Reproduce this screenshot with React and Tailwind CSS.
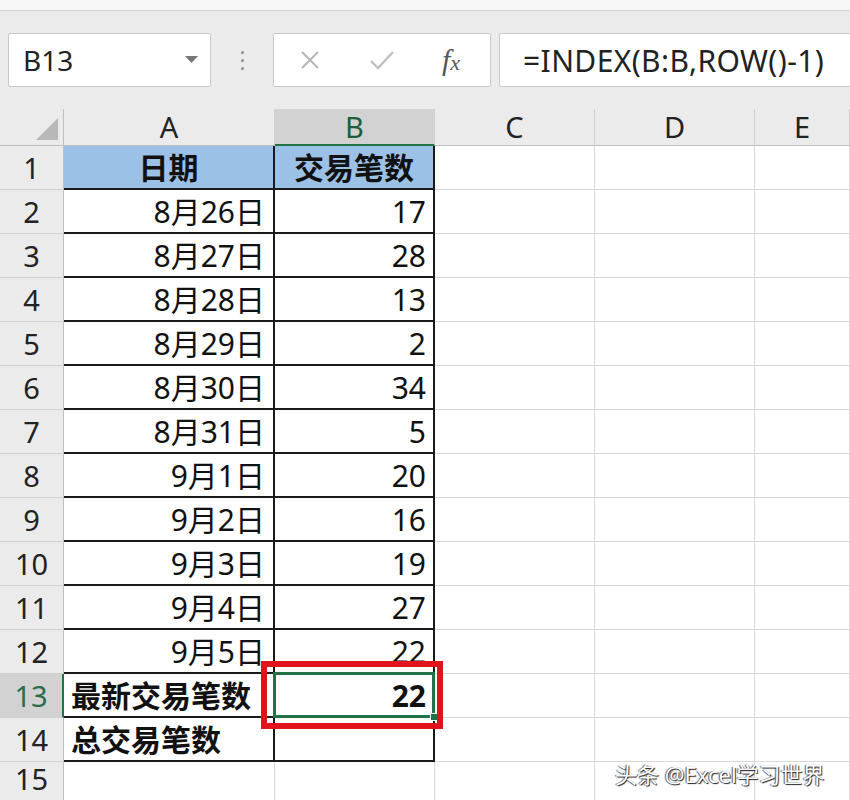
import React from 'react';

const font = "font-['Noto_Sans','Noto_Sans_CJK_SC',sans-serif]";

const data = [
  ['8月26日', 17],
  ['8月27日', 28],
  ['8月28日', 13],
  ['8月29日', 2],
  ['8月30日', 34],
  ['8月31日', 5],
  ['9月1日', 20],
  ['9月2日', 16],
  ['9月3日', 19],
  ['9月4日', 27],
  ['9月5日', 22],
];

const cols = ['A', 'B', 'C', 'D', 'E'];

// Toolbar with name box and formula bar
function FormulaBar() {
  return (
    <div className="h-[99px] bg-[#ebebeb] border-t border-[#d6d6d6] flex items-start pt-[22px]">
      <div className="ml-[8px] w-[203px] h-[54px] bg-white border border-[#c8c8c8] rounded-[2px] flex items-center justify-between pl-[14px] pr-[12px]">
        <span className="text-[28px] text-[#222]">B13</span>
        <svg width="13" height="8" viewBox="0 0 13 8">
          <path d="M0 0 L13 0 L6.5 7 Z" fill="#777" />
        </svg>
      </div>
      <div className="w-[62px] h-[54px] flex flex-col items-center justify-center gap-[5px]">
        <span className="w-[3px] h-[3px] rounded-full bg-[#8a8a8a]" />
        <span className="w-[3px] h-[3px] rounded-full bg-[#8a8a8a]" />
        <span className="w-[3px] h-[3px] rounded-full bg-[#8a8a8a]" />
      </div>
      <div className="w-[218px] h-[54px] bg-white border border-[#c8c8c8] rounded-[2px] flex items-center">
        <svg className="ml-[25px]" width="22" height="22" viewBox="0 0 22 22">
          <path d="M3 3 L19 19 M19 3 L3 19" stroke="#b4b4b4" strokeWidth="1.8" fill="none" />
        </svg>
        <svg className="ml-[48px]" width="26" height="22" viewBox="0 0 26 22">
          <path d="M2 12 L9 19 L24 3" stroke="#c0c0c0" strokeWidth="2.4" fill="none" />
        </svg>
        <span className="ml-[47px] text-[30px] italic text-[#555] font-['Liberation_Serif',serif] leading-none">
          f<span className="text-[22px]">x</span>
        </span>
      </div>
      <div className="ml-[8px] flex-1 h-[54px] bg-white border border-r-0 border-[#c8c8c8] rounded-l-[2px] flex items-center pl-[23px]">
        <span className="text-[30px] text-[#222] tracking-[0.4px]">=INDEX(B:B,ROW()-1)</span>
      </div>
    </div>
  );
}

function Corner() {
  return (
    <div className="bg-[#ebebeb] border-r border-b border-[#bfbfbf] flex items-end justify-end pr-[5px] pb-[5px]">
      <svg width="22" height="22" viewBox="0 0 22 22">
        <path d="M22 0 L22 22 L0 22 Z" fill="#b8b8b8" />
      </svg>
    </div>
  );
}

function ColHeader({ label }) {
  const sel = label === 'B';
  return (
    <div
      className={
        'flex items-center justify-center text-[29px] border-r border-[#cfcfcf] ' +
        (sel
          ? 'bg-[#d2d2d2] text-[#1d5e3a] border-b-2 border-b-[#217346]'
          : 'bg-[#ebebeb] text-[#222] border-b border-b-[#bfbfbf]')
      }
    >
      {label}
    </div>
  );
}

function RowHeader({ n }) {
  const sel = n === 13;
  const last = n === 15;
  return (
    <div
      className={
        'flex justify-center text-[29px] border-b border-[#d0d0d0] ' +
        (last ? 'items-start leading-[34px] ' : 'items-center ') +
        (sel
          ? 'bg-[#d2d2d2] text-[#2d6b4a] border-r-2 border-r-[#217346]'
          : 'bg-[#ebebeb] text-[#222] border-r border-r-[#bfbfbf]')
      }
    >
      {n}
    </div>
  );
}

function Empty() {
  return <div className="bg-white border-r border-b border-[#d9d9d9]" />;
}

export default function App() {
  const rowNums = Array.from({ length: 15 }, (_, i) => i + 1);

  const cellA = (r) => {
    const base = 'border-r-2 border-b-2 border-[#1a1a1a] flex items-center text-[30px] text-[#111] ';
    if (r === 1) return <div className={base + 'bg-[#9bc2e6] justify-center font-bold text-[28px]'}>日期</div>;
    if (r <= 12) return <div className={base + 'bg-white justify-end pr-[8px]'}>{data[r - 2][0]}</div>;
    if (r === 13) return <div className={base + 'bg-white pl-[7px] font-bold text-[28px]'}>最新交易笔数</div>;
    if (r === 14) return <div className={base + 'bg-white pl-[7px] font-bold text-[28px]'}>总交易笔数</div>;
    return <Empty />;
  };

  const cellB = (r) => {
    const base = 'border-r-2 border-b-2 border-[#1a1a1a] flex items-center text-[30px] text-[#111] ';
    if (r === 1) return <div className={base + 'bg-[#9bc2e6] justify-center font-bold text-[28px]'}>交易笔数</div>;
    if (r <= 12) return <div className={base + 'bg-white justify-end pr-[7px]'}>{data[r - 2][1]}</div>;
    if (r === 13)
      return (
        <div className={base + 'bg-white justify-end pr-[7px] font-bold relative'}>
          <div className="absolute left-[-2px] top-[-2px] right-[-2px] bottom-[-2px] border-[3px] border-[#217346]" />
          <div className="absolute right-[-5px] bottom-[-5px] w-[8px] h-[8px] bg-[#217346] border border-white" />
          <span className="relative">22</span>
        </div>
      );
    if (r === 14) return <div className={base + 'bg-white'} />;
    return <Empty />;
  };

  return (
    <div className={'relative w-[850px] h-[800px] overflow-hidden bg-white ' + font}>
      <div className="h-[10px] bg-[#f7f7f7]" />
      <FormulaBar />
      <div className="grid grid-cols-[64px_211px_160px_160px_160px_95px] grid-rows-[37px_repeat(15,44px)]">
        <Corner />
        {cols.map((c) => (
          <ColHeader key={c} label={c} />
        ))}
        {rowNums.map((r) => (
          <React.Fragment key={r}>
            <RowHeader n={r} />
            {cellA(r)}
            {cellB(r)}
            <Empty />
            <Empty />
            <Empty />
          </React.Fragment>
        ))}
      </div>

      {/* red highlight annotation */}
      <div className="absolute left-[261px] top-[661px] w-[182px] h-[68px] border-[6px] border-[#e3131b]" />

      {/* watermark */}
      <div className="absolute left-[615px] top-[758px] text-[22px] text-white [text-shadow:1px_1px_1px_#222,-1px_0_1px_#555]">
        头条 @Excel学习世界
      </div>
    </div>
  );
}
